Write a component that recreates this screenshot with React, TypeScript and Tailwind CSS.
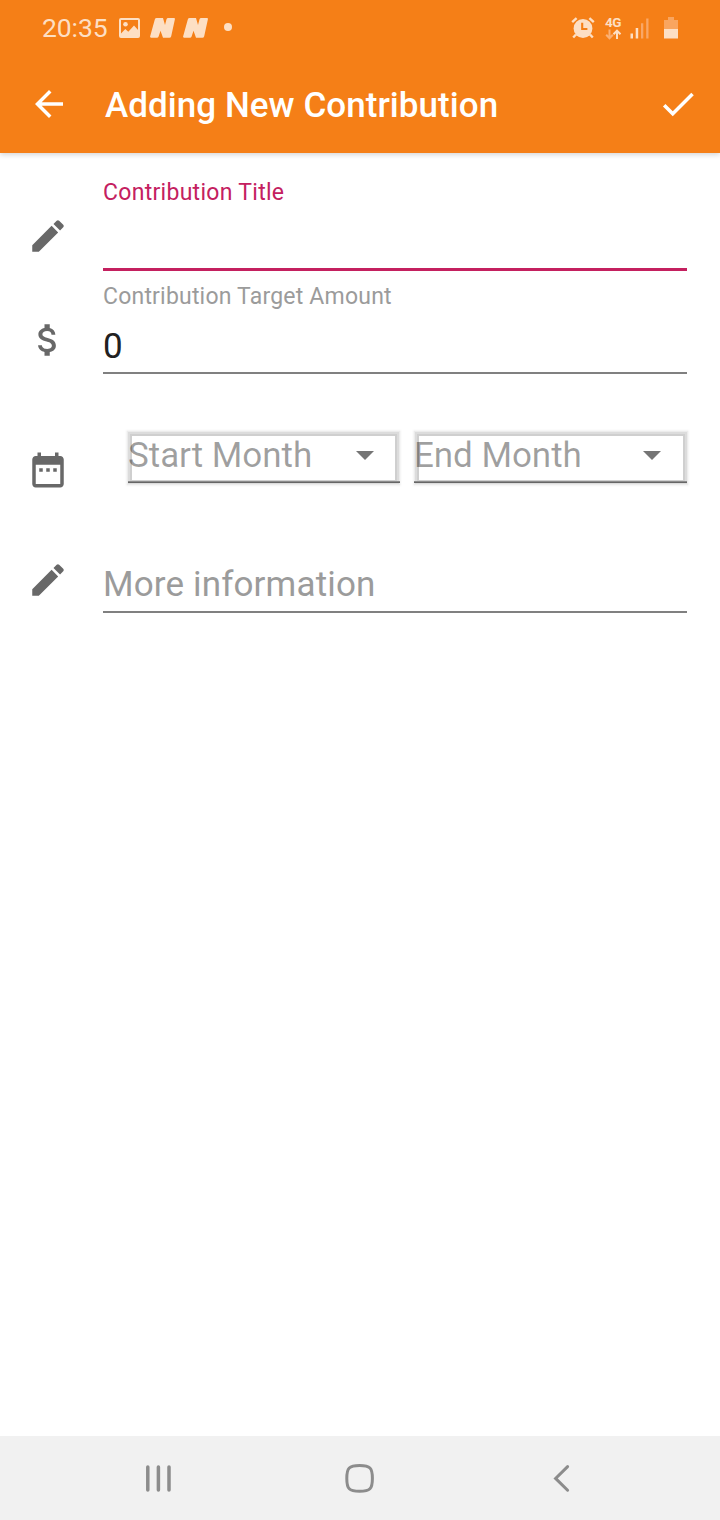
import React from "react";

function Pencil() {
  return (
    <svg viewBox="0 0 24 24" className="h-[42px] w-[42px] fill-[#686868]">
      <path d="M3 17.25V21h3.75L17.81 9.94l-3.75-3.75L3 17.25zM20.71 7.04a.996.996 0 0 0 0-1.41l-2.34-2.34a.996.996 0 0 0-1.41 0l-1.83 1.83 3.75 3.75 1.83-1.83z" />
    </svg>
  );
}

function NewsMark() {
  return (
    <svg viewBox="0 0 25 20" className="h-[20px] w-[25px] fill-[#fddfc4]">
      <path d="M4.800 1.400Q5.200 0 6.600 0H13L15 7L16.500 1.300Q16.900 0 18.200 0H24Q25.200 0 24.900 1.300L21.200 18.200Q20.800 19.700 19.400 19.700H13L10.500 12.800L8.600 18.400Q8.200 19.700 6.900 19.700H1Q-.2 19.700.1 18.400Z" />
    </svg>
  );
}

function StatusBar() {
  return (
    <div className="flex h-[55px] items-start pl-[42px]">
      <span className="w-[77px] pt-[12px] text-[26.5px] leading-[31px] tracking-[-0.1px] text-[#fddfc4]">20:35</span>
      <svg viewBox="0 0 21 20" className="mt-[18px] h-[20px] w-[21px]">
        <rect x="1" y="1" width="19" height="18" rx="1" fill="none" stroke="#fddfc4" strokeWidth="2" />
        <circle cx="6.5" cy="6.3" r="2.3" fill="#fddfc4" />
        <path d="M2 15.5L6.3 11L9.3 13.7L15 7.5L19.5 12.5V18H2Z" fill="#fddfc4" />
      </svg>
      <div className="mt-[18px] ml-[10px] flex gap-[8px]">
        <NewsMark />
        <NewsMark />
      </div>
      <div className="mt-[23px] ml-[16px] h-[8px] w-[8px] rounded-full bg-[#fddfc4]" />
      <svg viewBox="0 0 24 22" className="mt-[17px] ml-[338.6px] h-[22px] w-[24px]">
        <circle cx="12" cy="11.5" r="9.4" fill="#fddfc4" />
        <path d="M1.2 5.2L5.6 1.2M22.8 5.2L18.4 1.2" stroke="#fddfc4" strokeWidth="2.4" fill="none" />
        <path d="M5 17.5L2.2 20.5M19 17.5L21.8 20.5" stroke="#fddfc4" strokeWidth="2.4" fill="none" />
        <path d="M11.2 5.8V12H16.4" stroke="#f57f17" strokeWidth="2.1" fill="none" />
      </svg>
      <div className="mt-[16px] ml-[10.4px] flex w-[18px] flex-col">
        <span className="h-[13px] text-[13.5px] leading-[13px] font-bold tracking-[-0.6px] text-[#fddfc4]">4G</span>
        <svg viewBox="0 0 18 11" className="h-[11px] w-[18px]">
          <path d="M4.500 .5V9M1.200 5.8L4.500 9.300L7.800 5.800" stroke="#fbb074" strokeWidth="2" fill="none" />
          <path d="M12 10V2M8.500 5.200L12 1.700L15.500 5.200" stroke="#fddfc4" strokeWidth="2" fill="none" />
        </svg>
      </div>
      <svg viewBox="0 0 19 21" className="mt-[18px] ml-[7px] h-[21px] w-[19px]">
        <path d="M.5 15.500h2.500v5h-2.500zM5.700 10h2.500v10.500h-2.500z" fill="#fddfc4" />
        <path d="M11 5.200h2.300v15.300h-2.300zM16.200.5h2.300v20h-2.300z" fill="#f9a767" />
      </svg>
      <svg viewBox="0 0 14 22" className="mt-[17px] ml-[15px] h-[22px] w-[14px]">
        <path d="M4 0h6v3h4v9H0V3h4z" fill="#f9a55f" />
        <path d="M0 12h14v9.500H0z" fill="#fddfc4" />
      </svg>
    </div>
  );
}

type MonthSelectProps = { label: string; className: string; panelClassName: string };

function MonthSelect({ label, className, panelClassName }: MonthSelectProps) {
  return (
    <div className={"grid h-[53px] grid-cols-1 grid-rows-[51px_2px] " + className}>
      <div
        className={
          "col-start-1 row-start-1 mt-[6px] h-[44px] bg-white shadow-[0_0_0_2px_#cfcfcf,0_0_0_4px_#dcdcdc,0_0_1px_5px_#ececec,0_0_2px_6px_#f5f5f5] " +
          panelClassName
        }
      />
      <div className="z-10 col-start-1 row-start-1 flex items-start justify-between pr-[26px]">
        <span className="pt-[5px] text-[35px] leading-[41px] tracking-[-0.05px] whitespace-nowrap text-black/38">{label}</span>
        <svg viewBox="0 0 18 9" className="mt-[21px] h-[9px] w-[18px] shrink-0 fill-[#757575]">
          <path d="M0 0h18L9 9z" />
        </svg>
      </div>
      <div className="z-10 col-start-1 row-start-2 border-t border-[#8c8c8c] bg-[#666666]" />
    </div>
  );
}

export default function App() {
  return (
    <div className="flex h-[1520px] w-[720px] flex-col bg-white font-[Roboto,sans-serif]">
      <header className="h-[153px] shrink-0 bg-[#f57f17] shadow-[0_2px_5px_rgba(0,0,0,0.16)]">
        <StatusBar />
        <div className="flex h-[98px] items-center pl-[28px]">
          <svg viewBox="0 0 24 24" className="h-[42px] w-[42px] fill-white">
            <path d="M20 11H7.830l5.590-5.590L12 4l-8 8 8 8 1.410-1.410L7.830 13H20v-2z" />
          </svg>
          <h1 className="ml-[35px] w-[552px] pt-[4px] text-[35px] leading-[42px] font-medium tracking-[0.05px] whitespace-nowrap text-white">
            Adding New Contribution
          </h1>
          <svg viewBox="0 0 24 24" className="h-[42px] w-[42px] shrink-0 fill-white">
            <path d="M9 16.170L4.830 12l-1.420 1.410L9 19 21 7l-1.410-1.410z" />
          </svg>
        </div>
      </header>

      <main className="flex grow flex-col">
        <div className="flex h-[118px]">
          <div className="w-[103px] pt-[62px] pl-[26.7px]">
            <Pencil />
          </div>
          <div className="w-[584px] border-b-[3px] border-[#c4205f] pt-[26px]">
            <label className="block text-[23px] leading-[28px] tracking-[0.29px] text-[#c4205f]">Contribution Title</label>
          </div>
        </div>

        <div className="flex h-[103px]">
          <div className="w-[103px] pt-[48px] pl-[26.7px]">
            <svg viewBox="0 0 24 24" className="h-[42px] w-[42px] fill-[#686868]">
              <path d="M11.800 10.900c-2.270-.59-3-1.200-3-2.150 0-1.090 1.010-1.850 2.700-1.850 1.780 0 2.440.85 2.500 2.100h2.210c-.07-1.720-1.120-3.300-3.210-3.810V3h-3v2.160c-1.940.42-3.500 1.680-3.500 3.610 0 2.310 1.910 3.460 4.700 4.130 2.500.6 3 1.480 3 2.410 0 .69-.49 1.790-2.700 1.790-2.060 0-2.870-.92-2.980-2.100h-2.200c.12 2.190 1.760 3.420 3.680 3.830V21h3v-2.150c1.950-.37 3.500-1.500 3.500-3.550 0-2.840-2.430-3.810-4.700-4.400z" />
            </svg>
          </div>
          <div className="w-[584px] border-b-2 border-[#808080] pt-[12px]">
            <label className="block text-[23px] leading-[28px] tracking-[0.2px] text-[#9b9b9b]">
              Contribution Target Amount
            </label>
            <div className="mt-[15px] text-[35px] leading-[41px] text-[#212121]">0</div>
          </div>
        </div>

        <div className="flex h-[170px]">
          <div className="w-[128px] pt-[75px] pl-[26.7px]">
            <svg viewBox="0 0 24 24" className="h-[42px] w-[42px] fill-[#686868]">
              <path d="M9 11H7v2h2v-2zm4 0h-2v2h2v-2zm4 0h-2v2h2v-2zm2-7h-1V2h-2v2H8V2H6v2H5c-1.110 0-1.990.9-1.990 2L3 20c0 1.100.89 2 2 2h14c1.100 0 2-.9 2-2V6c0-1.100-.9-2-2-2zm0 16H5V9h14v11z" />
            </svg>
          </div>
          <div className="flex gap-[14px] pt-[56px]">
            <MonthSelect label="Start Month" className="w-[272px]" panelClassName="ml-[4px] mr-[5px]" />
            <MonthSelect label="End Month" className="w-[273px]" panelClassName="ml-[5px] mr-[4px]" />
          </div>
        </div>

        <div className="flex h-[69px]">
          <div className="w-[103px] pt-[15px] pl-[26.7px]">
            <Pencil />
          </div>
          <div className="w-[584px] border-b-2 border-[#808080] pt-[20px]">
            <span className="block text-[35px] leading-[41px] tracking-[0.15px] text-[#9b9b9b]">More information</span>
          </div>
        </div>
      </main>

      <nav className="flex h-[84px] shrink-0 items-center bg-[#f1f1f1] pl-[145px]">
        <svg viewBox="0 0 28 30" className="h-[30px] w-[28px]">
          <path d="M2.800 3.900V26.900M13.400 3.900V26.900M24 3.900V26.900" stroke="#8c8c8c" strokeWidth="3.500" strokeLinecap="round" />
        </svg>
        <svg viewBox="0 0 30 30" className="ml-[172px] h-[30px] w-[30px]">
          <path d="M14.600 2.600C25.100 2.600 27.400 4.900 27.400 15.400S25.100 28.200 14.600 28.200 1.800 25.900 1.800 15.400 4.100 2.600 14.600 2.600Z" fill="none" stroke="#8c8c8c" strokeWidth="3" />
        </svg>
        <svg viewBox="0 0 20 30" className="ml-[177px] h-[30px] w-[20px]">
          <path d="M15.600 3.600L3.600 15.400L15.600 27.200" fill="none" stroke="#8c8c8c" strokeWidth="3" strokeLinecap="round" />
        </svg>
      </nav>
    </div>
  );
}
